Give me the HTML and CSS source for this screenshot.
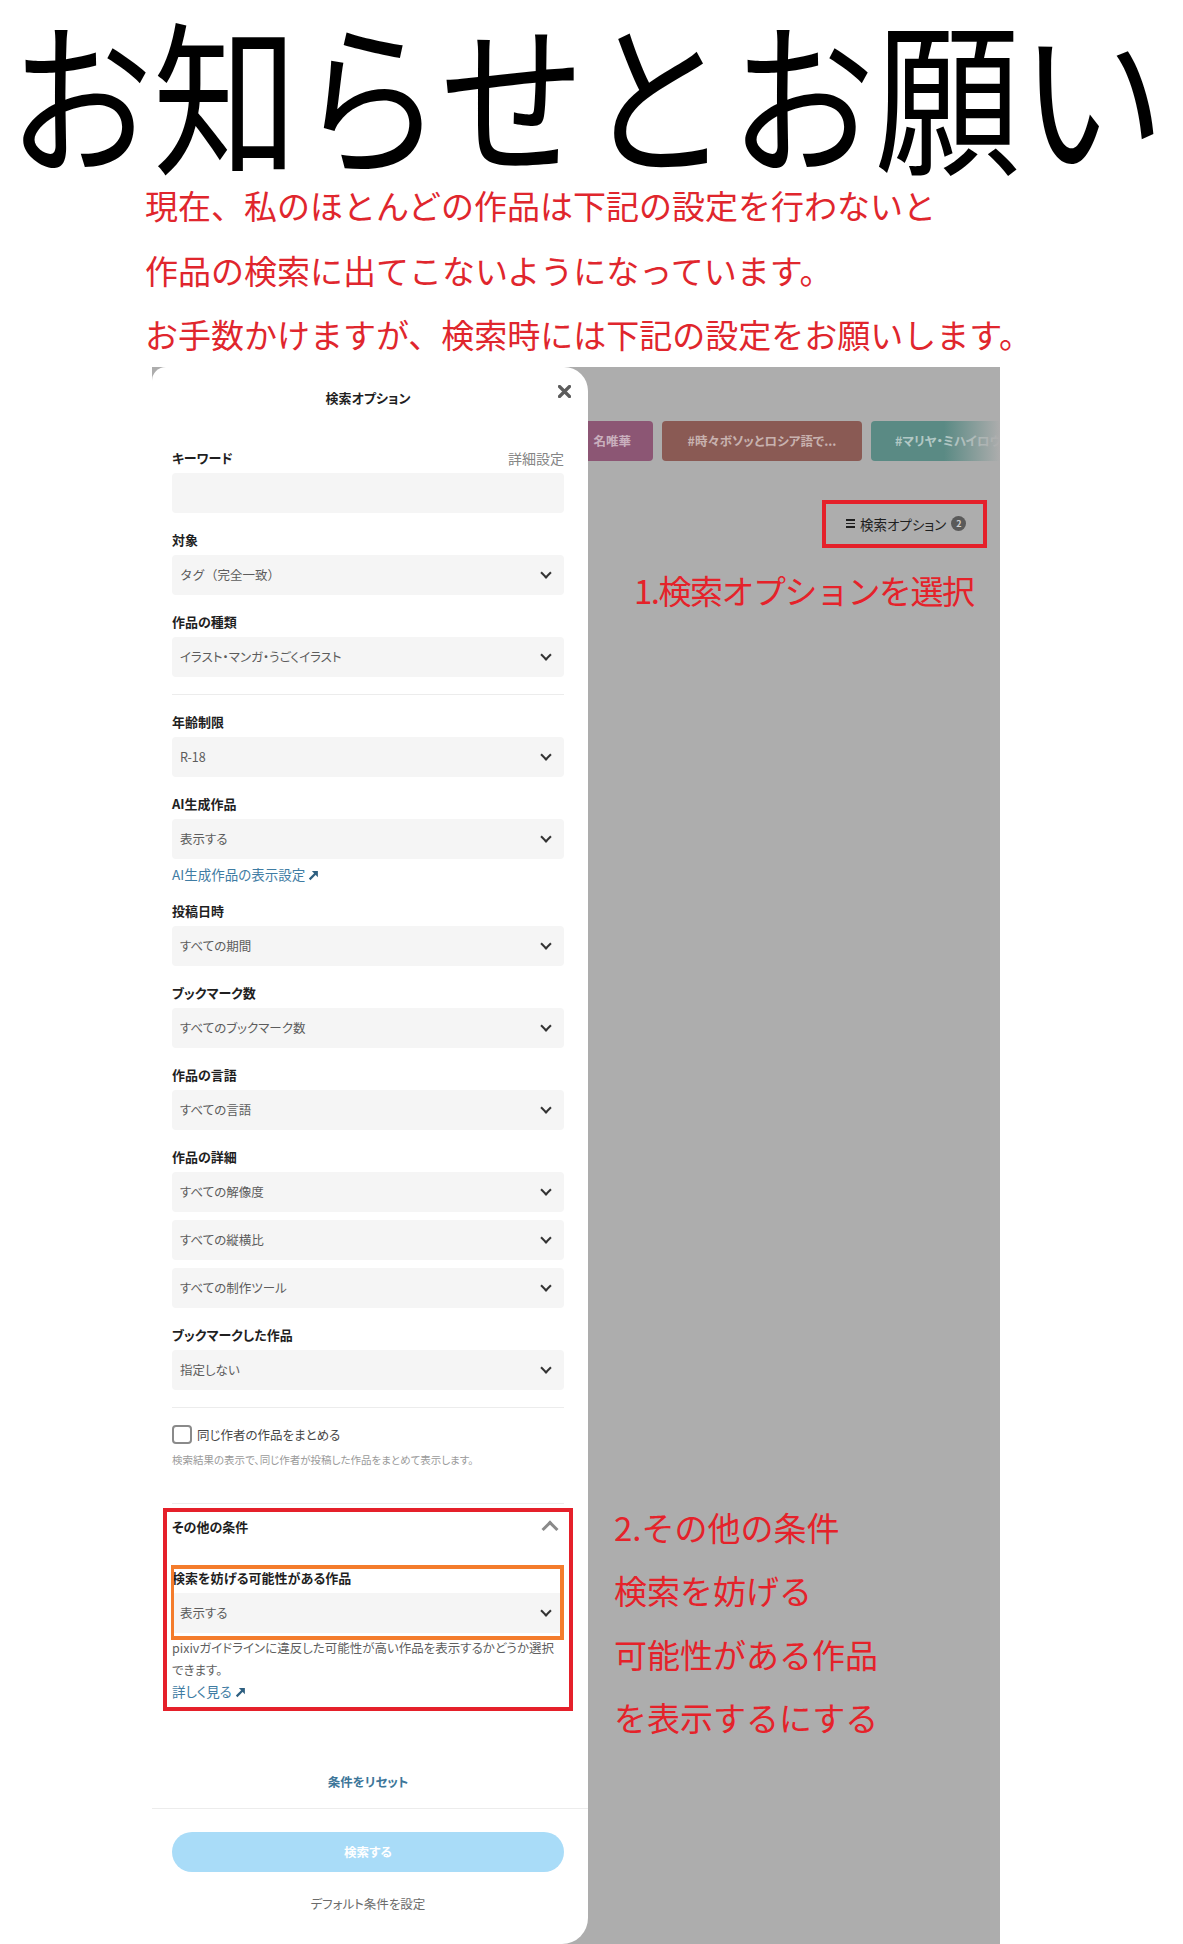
FILE: index.html
```html
<html lang="ja">
  <head>
    <meta charset="UTF-8" />
    <meta name="viewport" content="width=device-width, initial-scale=1.0" />
    <title>お知らせとお願い</title>

    <link rel="stylesheet" href="styles.css">
  </head>

  <body>
    <div class="page">
      <h1 class="noticeTitle">お知らせとお願い</h1>
      <div class="noticeText">
        <p>現在、私のほとんどの作品は下記の設定を行わないと</p>
        <p>作品の検索に出てこないようになっています。</p>
        <p>お手数かけますが、検索時には下記の設定をお願いします。</p>
      </div>

      <div class="shot">
        <!-- search option dialog -->
        <div class="modal">
          <div class="modalHeader">
            検索オプション
            <span class="close">
              <svg width="13" height="13" viewBox="0 0 13 13"><path d="M1.5 1.5l10 10M11.5 1.5l-10 10" stroke="#5c5c5c" stroke-width="3.2" stroke-linecap="round" /></svg>
            </span>
          </div>

          <div class="field">
            <div class="fieldLabel"><span>キーワード</span><span class="sub">詳細設定</span></div>
            <div class="input"></div>
          </div>
          <div class="field">
            <div class="fieldLabel">対象</div>
            <div class="select wide">タグ（完全一致）</div>
          </div>
          <div class="field">
            <div class="fieldLabel">作品の種類</div>
            <div class="select">イラスト・マンガ・うごくイラスト</div>
          </div>

          <div class="rule"></div>

          <div class="field">
            <div class="fieldLabel">年齢制限</div>
            <div class="select">R-18</div>
          </div>
          <div class="field">
            <div class="fieldLabel">AI生成作品</div>
            <div class="select">表示する</div>
            <div class="link">AI生成作品の表示設定 <svg class="arrow" width="11" height="11" viewBox="0 0 10 10"><path d="M1.5 8.5L7.5 2.5" stroke="#2e5f80" stroke-width="2" /><path d="M3.5 1H9V6.5z" fill="#2e5f80" /></svg></div>
          </div>
          <div class="field">
            <div class="fieldLabel">投稿日時</div>
            <div class="select">すべての期間</div>
          </div>
          <div class="field">
            <div class="fieldLabel">ブックマーク数</div>
            <div class="select">すべてのブックマーク数</div>
          </div>
          <div class="field">
            <div class="fieldLabel">作品の言語</div>
            <div class="select">すべての言語</div>
          </div>
          <div class="field">
            <div class="fieldLabel">作品の詳細</div>
            <div class="selectGroup">
              <div class="select">すべての解像度</div>
              <div class="select">すべての縦横比</div>
              <div class="select">すべての制作ツール</div>
            </div>
          </div>
          <div class="field">
            <div class="fieldLabel">ブックマークした作品</div>
            <div class="select">指定しない</div>
          </div>

          <div class="rule"></div>

          <label class="check"><span class="box"></span>同じ作者の作品をまとめる</label>
          <div class="hint">検索結果の表示で、同じ作者が投稿した作品をまとめて表示します。</div>

          <div class="rule ruleWide"></div>

          <div class="other">
            <div class="otherHeader">その他の条件</div>
            <div class="field fieldMarked">
              <div class="fieldLabel">検索を妨げる可能性がある作品</div>
              <div class="select">表示する</div>
              <span class="mark"></span>
            </div>
            <div class="otherNote">pixivガイドラインに違反した可能性が高い作品を表示するかどうか選択<br>できます。</div>
            <div class="link linkMore">詳しく見る <svg class="arrow" width="11" height="11" viewBox="0 0 10 10"><path d="M1.5 8.5L7.5 2.5" stroke="#2e5f80" stroke-width="2" /><path d="M3.5 1H9V6.5z" fill="#2e5f80" /></svg></div>
          </div>

          <div class="reset">条件をリセット</div>
          <div class="footerRule"></div>
          <div class="submit">検索する</div>
          <div class="defaults">デフォルト条件を設定</div>
        </div>

        <!-- page behind the dialog -->
        <div class="stage">
          <div class="tags">
            <span class="tag tagPlum">名唯華</span>
            <span class="tag tagBrown">#時々ボソッとロシア語で...</span>
            <span class="tag tagTeal">#マリヤ・ミハイロヴナ・九条</span>
          </div>
          <span class="tagsFade"></span>

          <div class="optionsRow">
            <div class="optionsButton">
              <span class="burger"><i></i><i></i><i></i></span>
              検索オプション
              <span class="badge">2</span>
            </div>
          </div>

          <div class="step stepOne">1.検索オプションを選択</div>

          <div class="step stepTwo">
            <p>2.その他の条件</p>
            <p>検索を妨げる</p>
            <p>可能性がある作品</p>
            <p>を表示するにする</p>
          </div>
        </div>
      </div>
    </div>
  </body>
</html>
```

FILE: styles.css
```css
* {
  box-sizing: border-box;
}

body {
  margin: 0;
  background: #fff;
  font-family: "Noto Sans CJK JP", "Noto Sans", sans-serif;
}

.page {
  width: 1183px;
  height: 1944px;
  overflow: hidden;
}

/* heading and red notice */

.noticeTitle {
  margin: 8px 0 0;
  padding-left: 8px;
  height: 165px;
  font-size: 145px;
  font-weight: 400;
  line-height: 1;
  color: #000;
  white-space: nowrap;
  transform: scaleY(1.14);
  transform-origin: top left;
}

.noticeText {
  padding-left: 145px;
  color: #e0262d;
  font-size: 33px;
  line-height: 64.5px;
}

.noticeText p {
  margin: 0;
  white-space: nowrap;
}

/* screenshot area */

.shot {
  display: flex;
  margin-left: 152px;
  width: 848px;
  height: 1577px;
  background: #adadad;
}

.modal {
  position: relative;
  z-index: 1;
  flex: none;
  width: 436px;
  padding: 21px 24px 0 20px;
  background: #fff;
  border-radius: 14px 24px 26px 0;
  font-feature-settings: "palt";
  color: #1f1f1f;
}

.modalHeader {
  margin-bottom: 40px;
  text-align: center;
  font-size: 13px;
  font-weight: 700;
  line-height: 20px;
}

.close {
  position: absolute;
  top: 18px;
  right: 17px;
  width: 13px;
  height: 13px;
}

.close svg {
  display: block;
}

.field {
  margin-bottom: 17px;
}

.fieldLabel {
  display: flex;
  justify-content: space-between;
  margin-bottom: 5px;
  font-size: 13px;
  font-weight: 700;
  line-height: 20px;
}

.fieldLabel .sub {
  font-size: 14px;
  font-weight: 400;
  color: #858585;
}

.input,
.select {
  height: 40px;
  border-radius: 4px;
  background: #f5f5f5;
}

.select {
  display: flex;
  align-items: center;
  justify-content: space-between;
  padding: 0 14px 0 8px;
  font-size: 12.5px;
  color: #5c5c5c;
}

.select.wide {
  font-feature-settings: normal;
}

.select::after {
  content: "";
  width: 6px;
  height: 6px;
  margin-top: -4px;
  border-right: 2px solid #333;
  border-bottom: 2px solid #333;
  transform: rotate(45deg);
}

.selectGroup {
  display: flex;
  flex-direction: column;
  gap: 8px;
}

.link {
  margin-top: 5px;
  font-size: 13.5px;
  line-height: 20px;
  color: #3f7ca3;
}

.arrow {
  vertical-align: -1px;
}

.rule {
  height: 1px;
  margin-bottom: 17px;
  background: #ececec;
}

.ruleWide {
  margin-top: 34px;
  margin-bottom: 13px;
}

.check {
  display: flex;
  align-items: center;
  gap: 5px;
  height: 20px;
  font-size: 12.5px;
  color: #474747;
}

.box {
  width: 20px;
  height: 19px;
  border: 2px solid #8a8a8a;
  border-radius: 4px;
}

.hint {
  margin-top: 6px;
  font-size: 10.5px;
  line-height: 18px;
  color: #9a9a9a;
}

/* other conditions, boxed in red */

.other {
  outline: 4px solid #e5202a;
  outline-offset: 5px;
}

.otherHeader {
  display: flex;
  justify-content: space-between;
  align-items: center;
  font-size: 13px;
  font-weight: 700;
  line-height: 20px;
}

.otherHeader::after {
  content: "";
  width: 9px;
  height: 9px;
  margin: 4px 8px 0 0;
  border-left: 3px solid #8a8a8a;
  border-top: 3px solid #8a8a8a;
  transform: rotate(45deg);
}

.fieldMarked {
  position: relative;
  margin: 31px 0 0;
}

.mark {
  position: absolute;
  top: -3px;
  left: -1px;
  right: 0;
  bottom: -7px;
  border: 4px solid #f47c2c;
  border-left-width: 3px;
}

.otherNote {
  margin-top: 4px;
  font-size: 12.5px;
  line-height: 22px;
  color: #5f5f5f;
  white-space: nowrap;
}

.linkMore {
  margin-top: 0;
  line-height: 21px;
}

/* dialog footer */

.reset {
  margin-top: 70px;
  text-align: center;
  font-size: 12.5px;
  font-weight: 700;
  line-height: 20px;
  color: #3d7699;
}

.footerRule {
  height: 1px;
  margin: 16px -24px 0 -20px;
  background: #ececec;
}

.submit {
  height: 40px;
  margin-top: 23px;
  border-radius: 20px;
  background: #a9dcf8;
  color: #fff;
  font-size: 12.5px;
  font-weight: 700;
  line-height: 40px;
  text-align: center;
}

.defaults {
  margin-top: 22px;
  text-align: center;
  font-size: 12.5px;
  line-height: 20px;
  color: #6b6b6b;
}

/* dimmed page behind the dialog */

.stage {
  position: relative;
  flex: 1;
  overflow: hidden;
  padding: 54px 13px 0 0;
}

.tags {
  display: flex;
  gap: 9px;
  margin-left: -60px;
}

.tag {
  flex: none;
  display: flex;
  align-items: center;
  height: 40px;
  border-radius: 4px;
  font-size: 12.5px;
  font-weight: 700;
  font-feature-settings: "palt";
  color: rgba(255, 255, 255, 0.55);
  white-space: nowrap;
  overflow: hidden;
}

.tagPlum {
  width: 125px;
  justify-content: flex-end;
  padding-right: 22px;
  background: #8c5674;
}

.tagBrown {
  width: 200px;
  justify-content: center;
  background: #8a5a54;
}

.tagTeal {
  width: 200px;
  padding-left: 24px;
  background: #5a8a84;
}

.tagsFade {
  position: absolute;
  top: 54px;
  right: 0;
  width: 56px;
  height: 40px;
  background: linear-gradient(to right, rgba(173, 173, 173, 0), #adadad);
}

.optionsRow {
  display: flex;
  justify-content: flex-end;
  margin-top: 39px;
}

.optionsButton {
  display: flex;
  align-items: center;
  gap: 5px;
  width: 165px;
  height: 48px;
  padding-left: 20px;
  border: 4px solid #e5202a;
  font-size: 13.5px;
  font-feature-settings: "palt";
  color: #1f1f1f;
}

.burger {
  display: flex;
  flex-direction: column;
  gap: 2px;
  width: 9px;
}

.burger i {
  height: 1.5px;
  background: #1f1f1f;
}

.badge {
  width: 15px;
  height: 15px;
  border-radius: 50%;
  background: #5a5a5a;
  color: #cfcfcf;
  font-size: 9px;
  font-weight: 700;
  line-height: 15px;
  text-align: center;
}

.step {
  color: #e5222a;
  font-size: 33px;
  white-space: nowrap;
}

.stepOne {
  margin-top: 20px;
  padding-left: 46px;
  line-height: 44px;
  letter-spacing: -1.5px;
}

.stepTwo {
  margin-top: 884px;
  padding-left: 26px;
  line-height: 63.5px;
}

.stepTwo p {
  margin: 0;
}
```
